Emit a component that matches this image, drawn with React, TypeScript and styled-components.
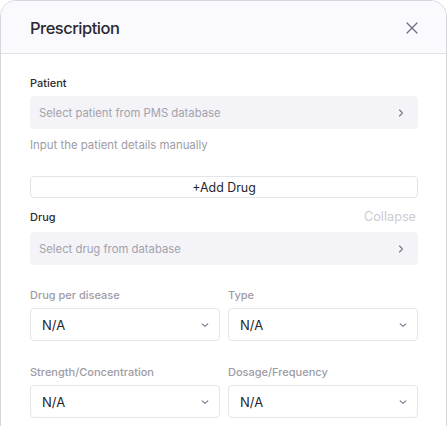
import React from "react";
import styled, { createGlobalStyle } from "styled-components";

const Global = createGlobalStyle`
  html, body { margin: 0; padding: 0; background: #ffffff; }
  body { font-family: Inter, "Noto Sans", sans-serif; -webkit-font-smoothing: antialiased; }
  * { box-sizing: border-box; }
`;

const Modal = styled.div`
  width: 447px;
  height: 440px;
  border: 1px solid #d6d6dc;
  border-radius: 16px 16px 0 0;
  background: #ffffff;
  overflow: hidden;
`;

const Header = styled.div`
  height: 53px;
  background: #faf9fd;
  border-bottom: 1px solid #e2e1e8;
  display: flex;
  align-items: center;
  justify-content: space-between;
  padding: 1px 26px 0 29px;
`;

const Title = styled.h1`
  margin: 0;
  font-size: 16.5px;
  font-weight: 500;
  color: #2a2a30;
  letter-spacing: -0.5px;
`;

const CloseButton = styled.button`
  border: none;
  background: none;
  padding: 0;
  width: 16px;
  height: 16px;
  display: flex;
  align-items: center;
  justify-content: center;
  color: #6e6c80;
  cursor: pointer;
`;

const Body = styled.div`
  padding: 21px 28px 0 29px;
  display: flex;
  flex-direction: column;
`;

const Label = styled.div<{ $muted?: boolean }>`
  font-size: 11px;
  line-height: 16px;
  font-weight: 500;
  color: ${(p) => (p.$muted ? "#9d9ca6" : "#2b2b30")};
  margin-bottom: 5px;
`;

const LabelRow = styled.div`
  display: flex;
  justify-content: space-between;
  align-items: center;
  margin-bottom: 7px;
  ${Label} { margin-bottom: 0; }
`;

const Collapse = styled.span`
  font-size: 12.7px;
  line-height: 16px;
  color: #cbcbd2;
  margin-right: 2px;
`;

const PickRow = styled.div`
  height: 33px;
  background: #f4f3f7;
  border-radius: 4px;
  display: flex;
  align-items: center;
  justify-content: space-between;
  padding: 0 12px 0 9px;
  font-size: 11.3px;
  color: #a3a2ad;
`;

const Hint = styled.div`
  margin-top: 8px;
  font-size: 11.4px;
  line-height: 16px;
  color: #9d9ca6;
`;

const AddButton = styled.button`
  margin-top: 23px;
  height: 22px;
  width: 100%;
  border: 1px solid #e3e3e8;
  border-radius: 4px;
  background: #ffffff;
  font-family: inherit;
  font-size: 12.4px;
  color: #26262b;
  padding: 0;
`;

const DrugSection = styled.div`
  margin-top: 11px;
  display: flex;
  flex-direction: column;
`;

const Grid = styled.div`
  margin-top: 22px;
  display: grid;
  grid-template-columns: 1fr 1fr;
  column-gap: 8px;
  row-gap: 23px;
`;

const Field = styled.div`
  display: flex;
  flex-direction: column;
`;

const SelectBox = styled.div`
  height: 33px;
  border: 1px solid #e4e4ea;
  border-radius: 4px;
  background: #ffffff;
  display: flex;
  align-items: center;
  justify-content: space-between;
  padding: 0 9px 0 11px;
  font-size: 13px;
  color: #26262b;
`;

const Chevron = ({ dir }: { dir: "right" | "down" }) =>
  dir === "right" ? (
    <svg width="10" height="10" viewBox="0 0 10 10" fill="none">
      <path d="M3.5 2 L6.5 5 L3.5 8" stroke="#77768a" strokeWidth="1.1" strokeLinecap="round" strokeLinejoin="round" />
    </svg>
  ) : (
    <svg width="10" height="10" viewBox="0 0 10 10" fill="none">
      <path d="M2.2 3.9 L5 6.4 L7.8 3.9" stroke="#77768a" strokeWidth="1.1" strokeLinecap="round" strokeLinejoin="round" />
    </svg>
  );

const fields = ["Drug per disease", "Type", "Strength/Concentration", "Dosage/Frequency"];

export default function App() {
  return (
    <>
      <Global />
      <Modal>
        <Header>
          <Title>Prescription</Title>
          <CloseButton aria-label="Close">
            <svg width="12" height="12" viewBox="0 0 12 12" fill="none">
              <path d="M1 1 L11 11 M11 1 L1 11" stroke="currentColor" strokeWidth="1.3" strokeLinecap="round" />
            </svg>
          </CloseButton>
        </Header>
        <Body>
          <Label>Patient</Label>
          <PickRow>
            <span>Select patient from PMS database</span>
            <Chevron dir="right" />
          </PickRow>
          <Hint>Input the patient details manually</Hint>
          <AddButton>+Add Drug</AddButton>
          <DrugSection>
            <LabelRow>
              <Label>Drug</Label>
              <Collapse>Collapse</Collapse>
            </LabelRow>
            <PickRow>
              <span>Select drug from database</span>
              <Chevron dir="right" />
            </PickRow>
          </DrugSection>
          <Grid>
            {fields.map((f) => (
              <Field key={f}>
                <Label $muted>{f}</Label>
                <SelectBox>
                  <span>N/A</span>
                  <Chevron dir="down" />
                </SelectBox>
              </Field>
            ))}
          </Grid>
        </Body>
      </Modal>
    </>
  );
}
